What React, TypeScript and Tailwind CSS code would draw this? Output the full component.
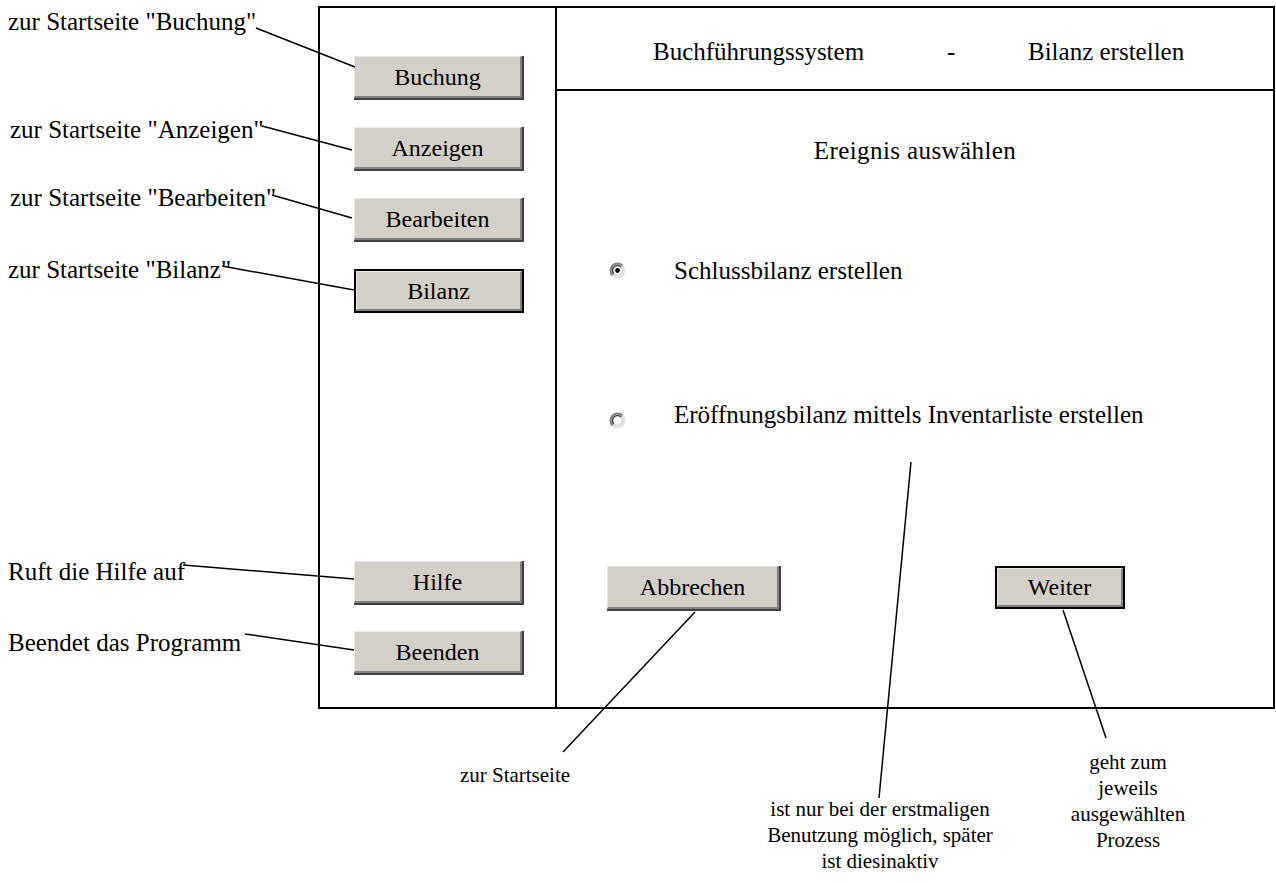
import React from "react";

const font = { fontFamily: '"Liberation Serif", "Times New Roman", serif' };

function Btn({ label, focused = false, w = "w-[170px]", h = "h-[44px]" }: { label: string; focused?: boolean; w?: string; h?: string }) {
  return (
    <div className={`${w} ${h} flex ${focused ? "border-2 border-black" : "border-r-2 border-b-2 border-[#404040]"}`}>
      <div className="flex-1 flex items-center justify-center bg-[#d4d0c8] border-t border-l border-t-[#e8e6e1] border-l-[#e8e6e1] border-r-2 border-b-2 border-r-[#808080] border-b-[#808080] text-[24px] leading-[26px] text-black">
        {label}
      </div>
    </div>
  );
}

function Radio({ checked }: { checked: boolean }) {
  return (
    <svg width="17" height="17" viewBox="0 0 17 17" className="shrink-0">
      <circle cx="8.5" cy="8.5" r="7" fill="#ffffff" />
      <path d="M 3.55 13.45 A 7 7 0 0 1 13.45 3.55" stroke="#808080" strokeWidth="2" fill="none" />
      <path d="M 4.96 12.04 A 5 5 0 0 1 12.04 4.96" stroke="#404040" strokeWidth="1.5" fill="none" />
      <path d="M 13.45 3.55 A 7 7 0 0 1 3.55 13.45" stroke="#e4e2dc" strokeWidth="2" fill="none" />
      <path d="M 12.04 4.96 A 5 5 0 0 1 4.96 12.04" stroke="#d4d0c8" strokeWidth="1.5" fill="none" />
      {checked && <circle cx="8.5" cy="8.5" r="2.4" fill="#000" />}
    </svg>
  );
}

export default function App() {
  return (
    <div className="relative w-[1276px] h-[883px] bg-white text-black overflow-hidden text-[25px] leading-[26px]" style={font}>
      <div className="pt-[6px] pl-[318px]">
        <div className="flex w-[957px] h-[703px] border-2 border-black">
          {/* left column */}
          <div className="w-[237px] border-r-2 border-black flex flex-col pl-[34px] pt-[48px] pb-[32px]">
            <div className="flex flex-col gap-[27px]">
              <Btn label="Buchung" />
              <Btn label="Anzeigen" />
              <Btn label="Bearbeiten" />
              <Btn label="Bilanz" focused />
            </div>
            <div className="mt-auto flex flex-col gap-[26px]">
              <Btn label="Hilfe" />
              <Btn label="Beenden" />
            </div>
          </div>
          {/* right column */}
          <div className="flex-1 flex flex-col">
            <div className="h-[83px] border-b-2 border-black flex items-center pl-[96px] pt-[6px]">
              <span className="w-[294px] shrink-0">Buchführungssystem</span>
              <span className="w-[81px] shrink-0">-</span>
              <span>Bilanz erstellen</span>
            </div>
            <div className="flex-1 flex flex-col pt-[47px]">
              <div className="text-center tracking-[0.4px]">Ereignis auswählen</div>
              <div className="mt-[94px] flex items-start pl-[52px]">
                <div className="mt-[4px]"><Radio checked /></div>
                <span className="ml-[48px]">Schlussbilanz erstellen</span>
              </div>
              <div className="mt-[118px] flex items-start pl-[52px]">
                <div className="mt-[10px]"><Radio checked={false} /></div>
                <span className="ml-[48px]">Eröffnungsbilanz mittels Inventarliste erstellen</span>
              </div>
              <div className="mt-[137px] flex items-start pl-[50px]">
                <Btn label="Abbrechen" w="w-[174px]" h="h-[45px]" />
                <div className="ml-[214px]">
                  <Btn label="Weiter" focused w="w-[130px]" h="h-[43px]" />
                </div>
              </div>
            </div>
          </div>
        </div>
      </div>

      {/* leader lines */}
      <svg className="absolute inset-0 pointer-events-none" width="1276" height="883">
        <g stroke="#000" strokeWidth="1.5">
          <line x1="256" y1="28" x2="355" y2="67" />
          <line x1="262" y1="126" x2="352" y2="150" />
          <line x1="272" y1="195" x2="352" y2="218" />
          <line x1="222" y1="266" x2="354" y2="290" />
          <line x1="183" y1="565" x2="354" y2="579" />
          <line x1="245" y1="634" x2="354" y2="650" />
          <line x1="695" y1="612" x2="563" y2="752" />
          <line x1="911" y1="462" x2="879" y2="798" />
          <line x1="1063" y1="610" x2="1106" y2="738" />
        </g>
      </svg>

      {/* annotations */}
      <div className="absolute left-[8px] top-[9px]">zur Startseite "Buchung"</div>
      <div className="absolute left-[10px] top-[117px]">zur Startseite "Anzeigen"</div>
      <div className="absolute left-[10px] top-[185px]">zur Startseite "Bearbeiten"</div>
      <div className="absolute left-[8px] top-[257px]">zur Startseite "Bilanz"</div>
      <div className="absolute left-[8px] top-[559px]">Ruft die Hilfe auf</div>
      <div className="absolute left-[8px] top-[630px]">Beendet das Programm</div>
      <div className="absolute left-[415px] w-[200px] top-[762px] text-center text-[21px]">zur Startseite</div>
      <div className="absolute left-[730px] w-[300px] top-[796px] text-center text-[21px]">
        ist nur bei der erstmaligen<br />Benutzung möglich, später<br />ist diesinaktiv
      </div>
      <div className="absolute left-[1028px] w-[200px] top-[749px] text-center text-[21px]">
        geht zum<br />jeweils<br />ausgewählten<br />Prozess
      </div>
    </div>
  );
}
